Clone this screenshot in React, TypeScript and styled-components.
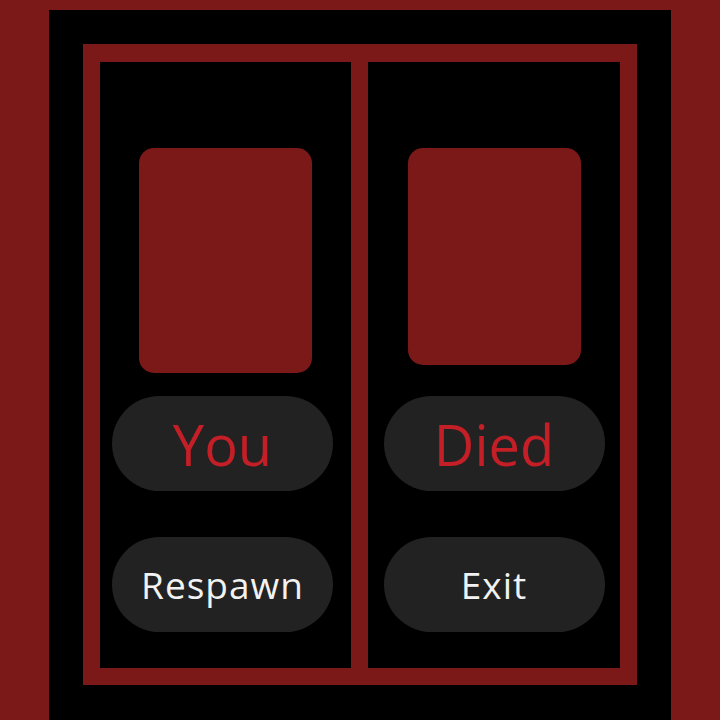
import React from "react";
import styled, { createGlobalStyle } from "styled-components";

const RED = "#7b1818";

const Global = createGlobalStyle`
  html, body {
    margin: 0;
    padding: 0;
    background: ${RED};
    font-family: "Open Sans", "Liberation Sans", sans-serif;
  }
`;

const Page = styled.div`
  width: 720px;
  height: 720px;
  overflow: hidden;
  background: ${RED};
  display: flex;
  justify-content: flex-start;
  padding: 10px 0 0 49px;
  box-sizing: border-box;
`;

const Panel = styled.div`
  width: 622px;
  height: 710px;
  background: #000;
  padding: 34px 34px 0 34px;
  box-sizing: border-box;
`;

const Frame = styled.div`
  width: 554px;
  height: 641px;
  background: ${RED};
  padding: 18px 17px 17px 17px;
  box-sizing: border-box;
  display: grid;
  grid-template-columns: 251px 252px;
  column-gap: 17px;
`;

const Column = styled.div`
  background: #000;
  display: flex;
  flex-direction: column;
  align-items: center;
  padding-top: 86px;
  box-sizing: border-box;
`;

const ThumbSlot = styled.div`
  height: 248px;
  display: flex;
  align-items: flex-start;
`;

const Thumb = styled.div<{ $h: number }>`
  width: 173px;
  height: ${(p) => p.$h}px;
  background: ${RED};
  border-radius: 15px;
`;

const Pill = styled.div<{ $title?: boolean; $shift?: number }>`
  width: 221px;
  height: 95px;
  border-radius: 48px;
  background: #222222;
  display: flex;
  align-items: center;
  justify-content: center;
  transform: translateX(${(p) => p.$shift ?? 0}px);
  color: ${(p) => (p.$title ? "#c41e27" : "#f2f2f2")};
  font-size: ${(p) => (p.$title ? "56px" : "37px")};
  letter-spacing: ${(p) => (p.$title ? "0" : "1px")};
  font-weight: 400;
  line-height: 1;
  & + & {
    margin-top: 46px;
  }
`;

export default function App() {
  return (
    <>
      <Global />
      <Page>
        <Panel>
          <Frame>
            <Column>
              <ThumbSlot>
                <Thumb $h={225} />
              </ThumbSlot>
              <Pill $title $shift={-3}>You</Pill>
              <Pill $shift={-3}>Respawn</Pill>
            </Column>
            <Column>
              <ThumbSlot>
                <Thumb $h={217} />
              </ThumbSlot>
              <Pill $title>Died</Pill>
              <Pill>Exit</Pill>
            </Column>
          </Frame>
        </Panel>
      </Page>
    </>
  );
}
